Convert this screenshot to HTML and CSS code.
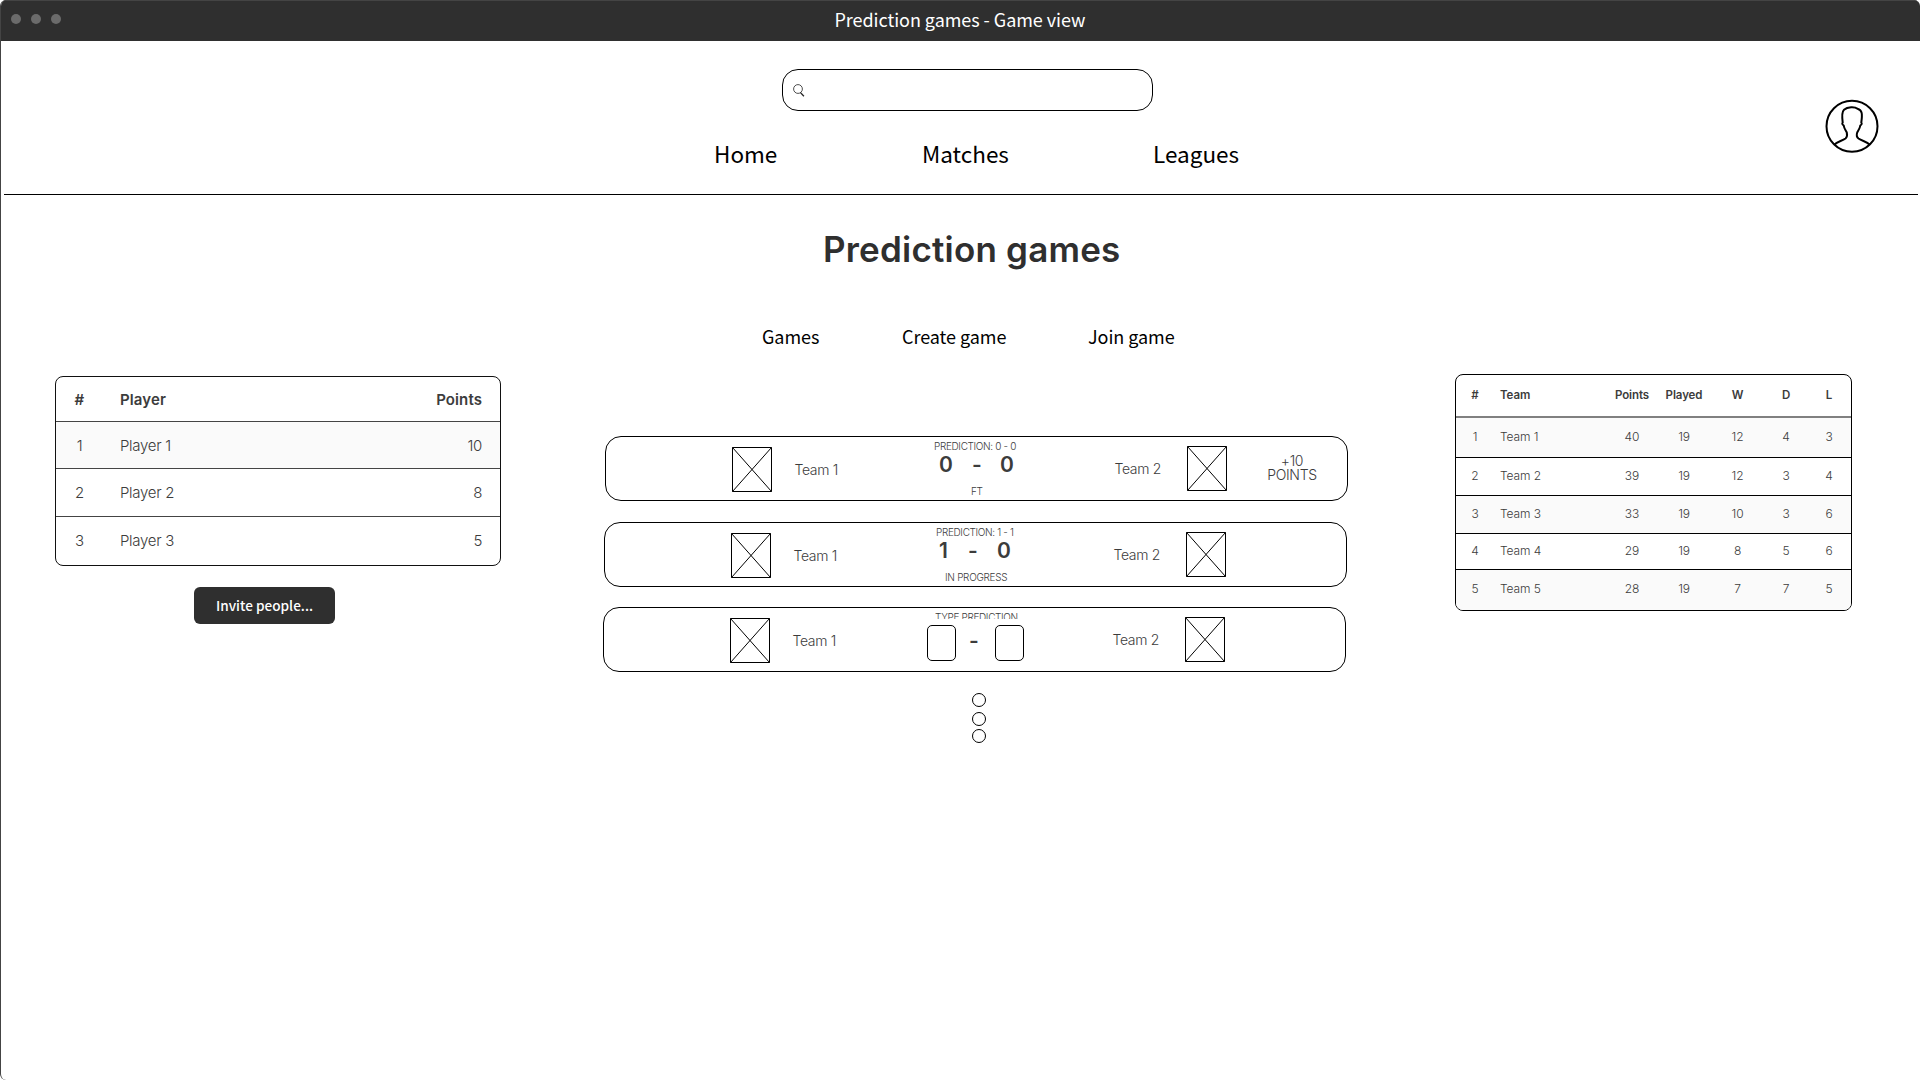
FILE: index.html
```html
<!DOCTYPE html>
<html lang="en">
<head>
<meta charset="utf-8">
<title>Prediction games - Game view</title>
<link rel="stylesheet" href="styles.css">
</head>
<body>
<svg class="defs" width="0" height="0">
  <symbol id="crest" viewBox="0 0 40 45"><path d="M.5.5h39v44h-39zM.5.5l39 44M39.5.5l-39 44" fill="none" stroke="#000"/></symbol>
</svg>
<div class="window">
  <header class="titlebar">
    <div class="dots"><i></i><i></i><i></i></div>
    <span class="window-title">Prediction games - Game view</span>
  </header>
  <div class="top">
    <div class="top-main">
      <div class="search">
        <svg width="12" height="13" viewBox="0 0 12 13" fill="none" stroke="#222"><circle cx="5" cy="5" r="4.4" stroke-width=".8"/><path d="M7.5 8.6l3.4 3.6" stroke-width="1.3"/></svg>
      </div>
      <nav class="nav"><a>Home</a><a>Matches</a><a>Leagues</a></nav>
    </div>
    <svg class="avatar" width="54" height="54" viewBox="0 0 54 54" fill="none" stroke="#000" stroke-width="2"><circle cx="27" cy="27.300" r="25.5"/><path d="M9.500 45.500C12 42.500 17 42 20.500 39.500C22.500 38 22.200 35.500 21.800 33.500C20.500 31 19 29 18.700 26.500Q16.500 25 17.700 23.500C17 18 16.500 13 19 10.700C22.500 7.500 30 7.500 32.500 9.700C37.300 11 37.500 15 36.300 23.500Q37.500 25 35.300 26.500C35 29 33.500 31 32.200 33.500C31.500 35.500 31.500 38 33.500 39.500C37 42 42 42.500 44.500 45.500"/></svg>
  </div>
  <h1 class="heading">Prediction games</h1>
  <nav class="subnav"><a>Games</a><a>Create game</a><a>Join game</a></nav>
  <main class="content">
    <section class="left">
      <div class="table players">
        <div class="row head"><span>#</span><span>Player</span><span>Points</span></div>
        <div class="row shade"><span>1</span><span>Player 1</span><span>10</span></div>
        <div class="row"><span>2</span><span>Player 2</span><span>8</span></div>
        <div class="row"><span>3</span><span>Player 3</span><span>5</span></div>
      </div>
      <button class="invite">Invite people...</button>
    </section>
    <section class="matches">
      <article class="match m1">
        <svg class="crest"><use href="#crest"/></svg><span class="team">Team 1</span>
        <div class="center">
          <span class="small pred">PREDICTION: 0 - 0</span>
          <div class="score"><b>0</b><b>-</b><b>0</b></div>
          <span class="small status">FT</span>
        </div>
        <span class="team away">Team 2</span><svg class="crest away"><use href="#crest"/></svg>
        <span class="bonus">+10<br>POINTS</span>
      </article>
      <article class="match m2">
        <svg class="crest"><use href="#crest"/></svg><span class="team">Team 1</span>
        <div class="center">
          <span class="small pred">PREDICTION: 1 - 1</span>
          <div class="score"><b>1</b><b>-</b><b>0</b></div>
          <span class="small status">IN PROGRESS</span>
        </div>
        <span class="team away">Team 2</span><svg class="crest away"><use href="#crest"/></svg>
      </article>
      <article class="match m3">
        <svg class="crest"><use href="#crest"/></svg><span class="team">Team 1</span>
        <div class="center">
          <span class="small type">TYPE PREDICTION</span>
          <div class="entry"><i class="box"></i><b>-</b><i class="box"></i></div>
        </div>
        <span class="team away">Team 2</span><svg class="crest away"><use href="#crest"/></svg>
      </article>
      <div class="more"><i></i><i></i><i></i></div>
    </section>
    <section class="right">
      <div class="table teams">
        <div class="row head"><span>#</span><span>Team</span><span>Points</span><span>Played</span><span>W</span><span>D</span><span>L</span></div>
        <div class="row shade"><span>1</span><span>Team 1</span><span>40</span><span>19</span><span>12</span><span>4</span><span>3</span></div>
        <div class="row"><span>2</span><span>Team 2</span><span>39</span><span>19</span><span>12</span><span>3</span><span>4</span></div>
        <div class="row shade"><span>3</span><span>Team 3</span><span>33</span><span>19</span><span>10</span><span>3</span><span>6</span></div>
        <div class="row"><span>4</span><span>Team 4</span><span>29</span><span>19</span><span>8</span><span>5</span><span>6</span></div>
        <div class="row shade"><span>5</span><span>Team 5</span><span>28</span><span>19</span><span>7</span><span>7</span><span>5</span></div>
      </div>
    </section>
  </main>
</div>
</body>
</html>
```
FILE: styles.css
```css
* { box-sizing: border-box; }
body { margin: 0; background: #fff; font-family: Inter, "Liberation Sans", sans-serif; color: #3c3c3c; }
.defs { display: block; height: 0; }
.window { width: 1920px; height: 1080px; overflow: hidden; border-left: 1px solid #444; border-radius: 6px; background: #fff; }
.titlebar { height: 41px; margin-left: -1px; background: #2f2f2f; border-top: 1px solid #444; display: grid; grid-template-columns: 833.5px 1fr; color: #fff; font: 18px/37px "Noto Sans CJK SC", sans-serif; letter-spacing: -.05px; border-left: 1px solid #444; }
.dots { display: flex; gap: 10px; padding: 13px 0 0 10px; }
.dots i { width: 10px; height: 10px; border-radius: 50%; background: #6b6b6b; }
.window-title { white-space: nowrap; }

.top { height: 154px; margin: 0 2px 0 3px; border-bottom: 1px solid #000; display: flex; justify-content: space-between; padding-right: 39px; }
.top-main { padding: 28px 0 0 710px; }
.search { width: 371px; height: 42px; margin-left: 68px; border: 1px solid #000; border-radius: 16px; padding: 14px 0 0 10px; }
.search svg { display: block; }
.nav { display: flex; color: #000; font: 22.5px/36px "Noto Sans CJK SC", sans-serif; margin-top: 24px; }
.nav a { width: 208px; }
.nav a:nth-child(2) { width: 231px; }
.nav a:nth-child(3) { width: 100px; }
.avatar { margin-top: 58px; }

.heading { margin: 33px 0 0 822px; font-size: 35px; line-height: 42px; font-weight: 600; color: #2f2f2f; letter-spacing: .2px; white-space: nowrap; }
.subnav { display: flex; margin: 52px 0 0 761px; color: #000; font: 18px/28px "Noto Sans CJK SC", sans-serif; letter-spacing: -.05px; white-space: nowrap; }
.subnav a { width: 140px; }
.subnav a:nth-child(2) { width: 186px; }

.content { display: grid; grid-template-columns: 548px 906px 1fr; height: 600px; margin-top: 2px; }
.left { padding: 24px 0 0 54px; }
.table { border: 1px solid #111; border-radius: 8px; overflow: hidden; }
.row { display: grid; align-items: center; border-bottom: 1px solid #222; }
.row:last-child { border-bottom: 0; }
.shade { background: #fafafa; }
.head { font-weight: 600; }
.players { width: 446px; height: 190px; font-size: 15px; font-weight: 300; grid-template-rows: 45px 47px 48px 48px; display: grid; letter-spacing: -.3px; }
.players .row { grid-template-columns: 47px 1fr 100px; padding-right: 18px; border-color: #444; }
.players .row:last-child { padding-bottom: 2px; }
.players .row span:first-child { text-align: center; }
.players .row span:nth-child(2) { padding-left: 17px; }
.players .row span:last-child { text-align: right; }
.players .head { font-weight: 600; letter-spacing: .1px; }
.invite { display: block; margin: 21px 0 0 139px; width: 141px; height: 37px; border: 0; border-radius: 6px; background: #2f2f2f; color: #fff; font: 500 13.6px/36px "Noto Sans CJK SC", sans-serif; padding: 0 0 1px; white-space: nowrap; }

.matches { padding: 84px 0 0 56px; }
.match { width: 743px; height: 65px; border: 1px solid #000; border-radius: 16px; display: grid; grid-template-columns: 126px 62px 104px 188px 101px 74px 1fr; align-items: start; }
.m2 { margin: 21px 0 0 -1px; }
.m3 { margin: 20px 0 0 -2px; }
.crest { width: 40px; height: 45px; margin-top: 10px; grid-column: 2; display: block; }
.crest.away { grid-column: 6; margin: 9px 0 0 0; }
.team { grid-column: 3; font-size: 14px; font-weight: 300; line-height: 20px; margin: 23px 0 0 .5px; white-space: nowrap; letter-spacing: -.35px; }
.team.away { grid-column: 5; margin: 22px 0 0 28.500px; }
.center { grid-column: 4; display: flex; flex-direction: column; padding-left: 36px; }
.small { font-size: 10px; line-height: 12px; font-weight: 300; white-space: nowrap; letter-spacing: -.35px; }
.pred { margin-top: 3px; }
.score { display: grid; grid-template-columns: 33px 28px 20px; margin: 1px 0 0 5px; font-size: 21px; line-height: 24px; }
.score b, .entry b { font-weight: 600; }
.status { margin: 8px 0 0 37px; }
.m2 .pred { margin-left: 3px; }
.m2 .score { margin-left: 6px; grid-template-columns: 29px 29px 20px; }
.m2 .status { margin-left: 12px; letter-spacing: -.3px; }
.type { margin: 4px 0 0 3px; overflow: hidden; align-self: flex-start; height: 7px; line-height: 11px; }
.entry { display: grid; grid-template-columns: 44px 24px 29px; margin: 6px 0 0 -5px; font-size: 21px; line-height: 32px; }
.entry b { margin-left: -2px; }
.box { width: 29px; height: 36px; border: 1px solid #000; border-radius: 5px; }
.bonus { grid-column: 7; font-size: 14px; line-height: 14px; font-weight: 300; text-align: center; margin: 16.500px 0 0 0; padding-right: 24px; letter-spacing: -.35px; }
.more { display: flex; flex-direction: column; padding: 21px 0 0 367px; }
.more i { width: 14px; height: 14px; border: 1px solid #000; border-radius: 50%; margin-bottom: 5px; }
.more i:nth-child(2) { margin-bottom: 3px; }

.teams { width: 397px; height: 237px; margin-top: 22px; border-color: #000; font-size: 12px; font-weight: 300; display: grid; grid-template-rows: 43px 40px 38px 38px 36px 40px; letter-spacing: -.1px; }
.teams .row { grid-template-columns: 38px 112px 52px 52px 55px 42px 44px; text-align: center; border-color: #000; padding-bottom: 2px; }
.teams .row:last-child { padding-bottom: 4px; }
.teams .row span:nth-child(2) { text-align: left; padding-left: 6px; }
.teams .head { font-size: 11.5px; font-weight: 600; border-bottom: 2px solid #808080; }
```
